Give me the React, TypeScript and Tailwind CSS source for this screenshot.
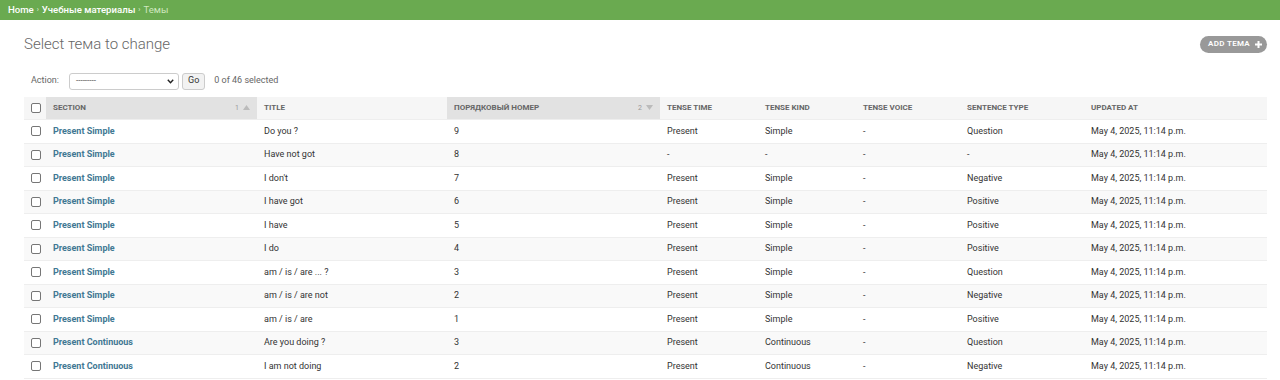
const rows = [
  { section: "Present Simple", title: "Do you ?", num: "9", time: "Present", kind: "Simple", voice: "-", type: "Question" },
  { section: "Present Simple", title: "Have not got", num: "8", time: "-", kind: "-", voice: "-", type: "-" },
  { section: "Present Simple", title: "I don't", num: "7", time: "Present", kind: "Simple", voice: "-", type: "Negative" },
  { section: "Present Simple", title: "I have got", num: "6", time: "Present", kind: "Simple", voice: "-", type: "Positive" },
  { section: "Present Simple", title: "I have", num: "5", time: "Present", kind: "Simple", voice: "-", type: "Positive" },
  { section: "Present Simple", title: "I do", num: "4", time: "Present", kind: "Simple", voice: "-", type: "Positive" },
  { section: "Present Simple", title: "am / is / are ... ?", num: "3", time: "Present", kind: "Simple", voice: "-", type: "Question" },
  { section: "Present Simple", title: "am / is / are not", num: "2", time: "Present", kind: "Simple", voice: "-", type: "Negative" },
  { section: "Present Simple", title: "am / is / are", num: "1", time: "Present", kind: "Simple", voice: "-", type: "Positive" },
  { section: "Present Continuous", title: "Are you doing ?", num: "3", time: "Present", kind: "Continuous", voice: "-", type: "Question" },
  { section: "Present Continuous", title: "I am not doing", num: "2", time: "Present", kind: "Continuous", voice: "-", type: "Negative" },
]

function Checkbox() {
  return <span className="block h-[10px] w-[10px] rounded-[2px] border border-[#767676] bg-white" />
}

function SortMark({ n, up }: { n: string; up: boolean }) {
  return (
    <span className="flex items-center gap-[4px] text-[7px] font-normal text-[#999]">
      {n}
      <svg width="7" height="5" viewBox="0 0 7 5">
        {up ? <path d="M0 5 L3.5 0 L7 5 Z" fill="#bbb" /> : <path d="M0 0 L3.5 5 L7 0 Z" fill="#bbb" />}
      </svg>
    </span>
  )
}

export default function App() {
  const th = "h-[23px] px-[7px] text-left text-[8px] font-bold uppercase text-[#666] border-b border-[#eee]"
  const td = "h-[23.5px] px-[7px] text-[9px] text-[#333] border-b border-[#eee]"
  return (
    <div className="min-h-[380px] bg-white" style={{ fontFamily: "Roboto, 'Liberation Sans', sans-serif" }}>
      <div className="flex h-[20px] items-center bg-[#6aaa50] px-[8px] text-[9.6px] font-medium text-white">
        <span>Home</span>
        <span className="mx-[3px] text-[7px] text-[#d6ecc9]">›</span>
        <span>Учебные материалы</span>
        <span className="mx-[3px] text-[7px] text-[#d6ecc9]">›</span>
        <span className="font-normal text-[#cfe8bf]">Темы</span>
      </div>

      <div className="pl-[24px] pr-[13px]">
        <div className="flex items-center justify-between pt-[13px]">
          <h1 className="text-[15px] font-light text-[#666]">Select тема to change</h1>
          <span className="flex h-[17px] items-center gap-[4px] rounded-full bg-[#999] pl-[8px] pr-[4px] text-[8px] font-semibold uppercase tracking-[0.3px] text-white">
            Add тема
            <svg width="9" height="9" viewBox="0 0 9 9">
              <path d="M4.5 1 V8 M1 4.5 H8" stroke="white" strokeWidth="2" />
            </svg>
          </span>
        </div>

        <div className="mt-[17px] flex h-[17px] items-center gap-[3px] pl-[7px] text-[9px] text-[#666]">
          <span className="mr-[7px]">Action:</span>
          <div className="flex h-[17px] w-[110px] items-center justify-between rounded-[3px] border border-[#ccc] bg-white pl-[6px] pr-[4px]">
            <span className="text-[8px] text-[#333]">---------</span>
            <svg width="7" height="5" viewBox="0 0 7 5">
              <path d="M0.8 0.8 L3.5 3.8 L6.2 0.8" stroke="#222" strokeWidth="1.4" fill="none" />
            </svg>
          </div>
          <span className="flex h-[17px] items-center rounded-[3px] border border-[#ccc] bg-[#f2f2f2] px-[5px] text-[9px] text-[#333]">Go</span>
          <span className="ml-[6px] text-[#666]">0 of 46 selected</span>
        </div>

        <table className="mt-[7px] w-[1243px] table-fixed border-collapse">
          <thead>
            <tr className="bg-[#f6f6f6]">
              <th className={`${th} w-[22px]`}><Checkbox /></th>
              <th className={`${th} w-[211px] bg-[#e2e2e2]`}>
                <div className="flex items-center justify-between">
                  <span>Section</span>
                  <SortMark n="1" up />
                </div>
              </th>
              <th className={`${th} w-[190px]`}>Title</th>
              <th className={`${th} w-[213px] bg-[#e2e2e2]`}>
                <div className="flex items-center justify-between">
                  <span>Порядковый номер</span>
                  <SortMark n="2" up={false} />
                </div>
              </th>
              <th className={`${th} w-[98px]`}>Tense time</th>
              <th className={`${th} w-[98px]`}>Tense kind</th>
              <th className={`${th} w-[104px]`}>Tense voice</th>
              <th className={`${th} w-[124px]`}>Sentence type</th>
              <th className={th}>Updated at</th>
            </tr>
          </thead>
          <tbody>
            {rows.map((r, i) => (
              <tr key={i} className={i % 2 === 0 ? "bg-white" : "bg-[#f9f9f9]"}>
                <td className={td}><Checkbox /></td>
                <td className={`${td} font-bold text-[#417893]`}>{r.section}</td>
                <td className={td}>{r.title}</td>
                <td className={td}>{r.num}</td>
                <td className={td}>{r.time}</td>
                <td className={td}>{r.kind}</td>
                <td className={td}>{r.voice}</td>
                <td className={td}>{r.type}</td>
                <td className={td}>May 4, 2025, 11:14 p.m.</td>
              </tr>
            ))}
          </tbody>
        </table>
      </div>
    </div>
  )
}
